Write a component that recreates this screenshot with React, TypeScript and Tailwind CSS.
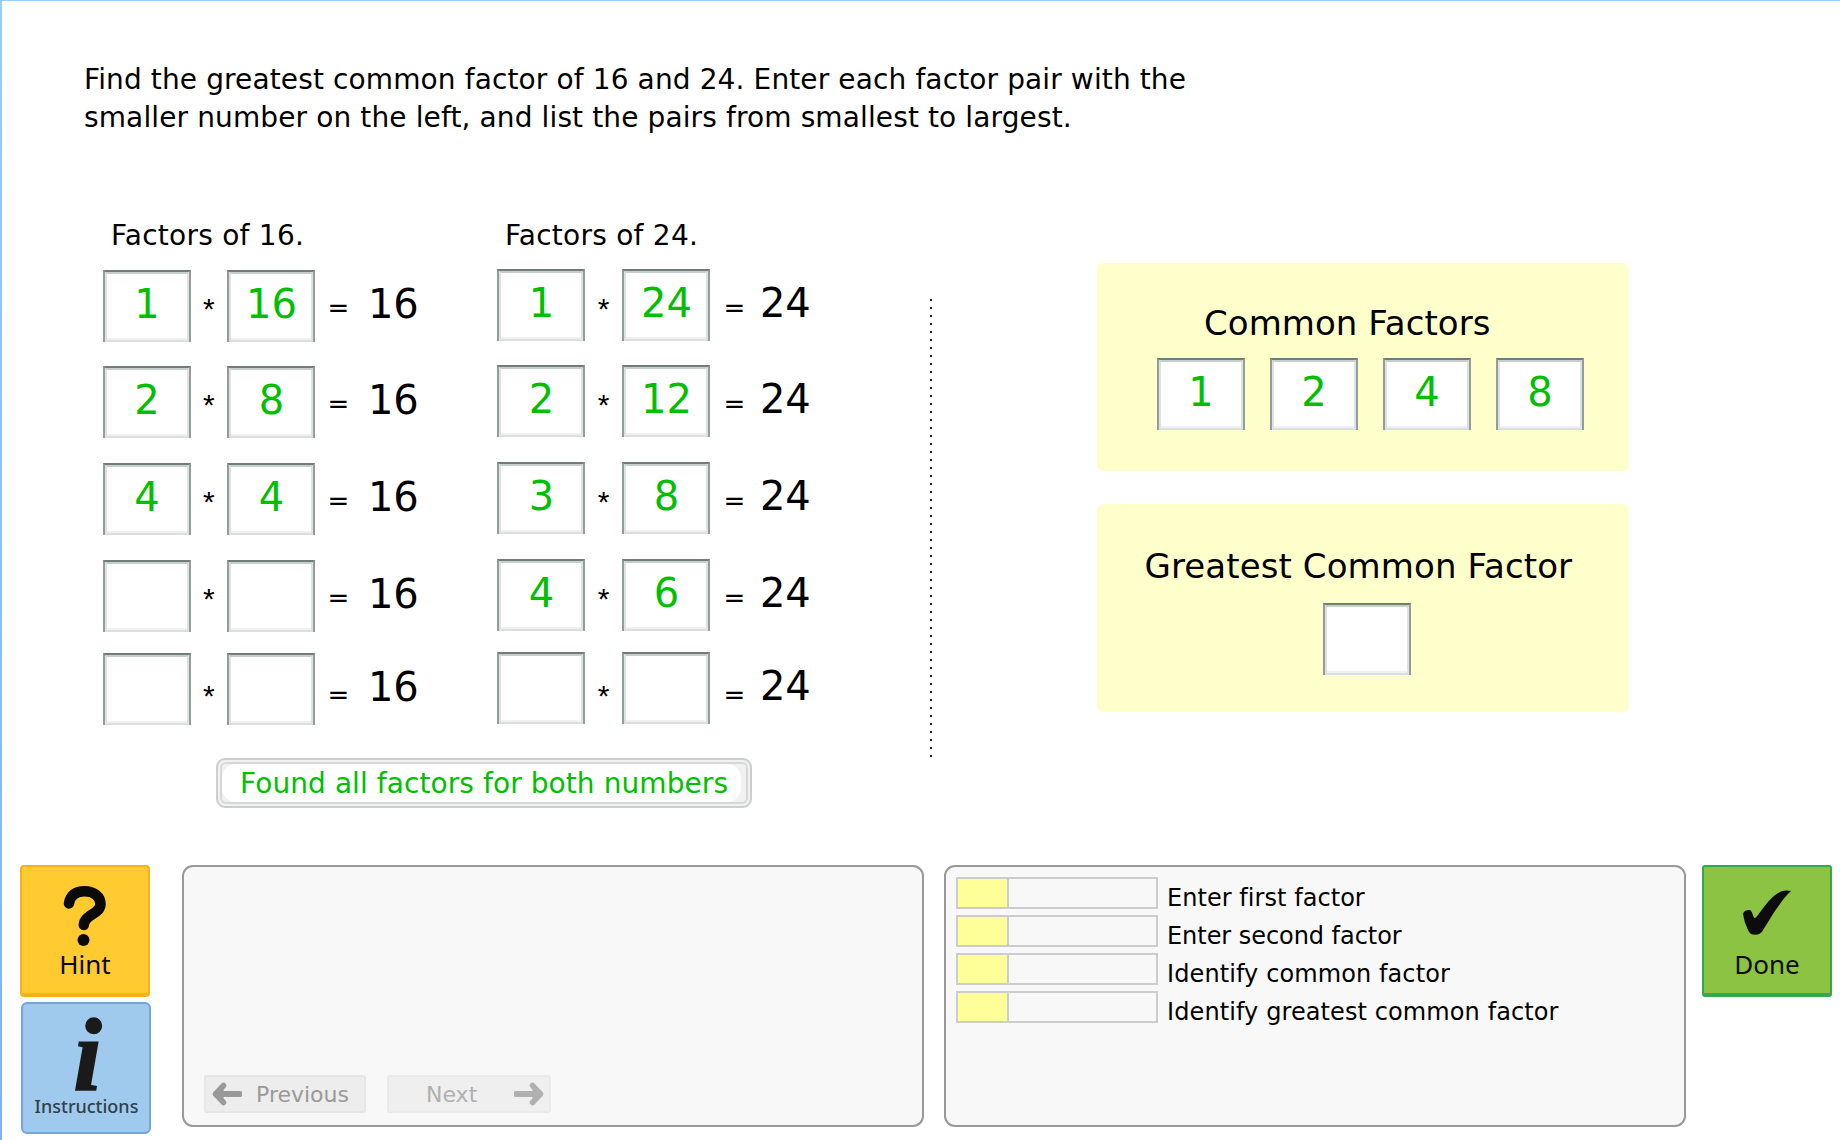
import type { ReactNode } from "react";

type Row = { left: string; right: string };

const factorsOf16: Row[] = [
  { left: "1", right: "16" },
  { left: "2", right: "8" },
  { left: "4", right: "4" },
  { left: "", right: "" },
  { left: "", right: "" },
];

const factorsOf24: Row[] = [
  { left: "1", right: "24" },
  { left: "2", right: "12" },
  { left: "3", right: "8" },
  { left: "4", right: "6" },
  { left: "", right: "" },
];

const commonFactors = ["1", "2", "4", "8"];

const skills = [
  { label: "Enter first factor", tracking: "tracking-[0.05px]" },
  { label: "Enter second factor", tracking: "tracking-[-0.050px]" },
  { label: "Identify common factor", tracking: "tracking-[0.1px]" },
  { label: "Identify greatest common factor", tracking: "tracking-[0.1px]" },
];

// Vertical gap above each row of a factor table; the last row sits a little closer.
const rowGaps = ["mt-0", "mt-[24px]", "mt-[25px]", "mt-[25px]", "mt-[21px]"];

function FactorBox({ value }: { value: string }) {
  return (
    <div className="h-[72px] w-[88px] shrink-0 border-x-2 border-t-2 border-x-[#939d9a] border-t-[#727c79] bg-white">
      <div className="h-[70px] border-2 border-x-[#dde3e1] border-b-[#d9dfdd] border-t-[#c5cfcc]">
        <div className="h-[66px] border-b-2 border-[#f0f0f0] pl-px text-center text-[40px] leading-[60px] text-[#00bf00]">
          {value}
        </div>
      </div>
    </div>
  );
}

function FactorTable({ title, total, rows, second }: { title: string; total: string; rows: Row[]; second?: boolean }) {
  return (
    <section className={second ? "w-[340px]" : "w-[394.5px]"}>
      <h2
        className={`pt-px text-[28px] leading-[32px] tracking-[0.25px] ${second ? "mb-[17px] pl-[8px]" : "mb-[18px] pl-[8.5px]"}`}
      >
        {title}
      </h2>
      {rows.map((row, i) => (
        <div key={i} className={`flex h-[72px] items-start ${rowGaps[i]}`}>
          <FactorBox value={row.left} />
          <span
            className={`shrink-0 text-center font-['Liberation_Sans',sans-serif] text-[30px] leading-[40px] ${
              second ? "w-[37px] pt-[20px]" : "w-[36.5px] pt-[19px]"
            } ${i === 4 ? "translate-y-[4px]" : ""}`}
          >
            *
          </span>
          <FactorBox value={row.right} />
          <span
            className={`shrink-0 text-center text-[26px] leading-[40px] ${
              second ? "w-[49px] pt-[19px]" : "w-[47px] pt-[18px]"
            } ${i === 4 ? "translate-y-[4px]" : ""}`}
          >
            =
          </span>
          <span className={`text-[40px] leading-[68px] tracking-[-0.3px] ${second ? "ml-[1px]" : "ml-[6px]"}`}>
            {total}
          </span>
        </div>
      ))}
    </section>
  );
}

function ToolButton({ className, children }: { className: string; children: ReactNode }) {
  return <button className={`flex flex-col items-center ${className}`}>{children}</button>;
}

function ArrowIcon({ className = "" }: { className?: string }) {
  return (
    <svg viewBox="0 0 30 24" className={`h-[24px] w-[30px] ${className}`} fill="none" stroke="currentColor">
      <path d="M27.500 12H9" strokeWidth="6.200" strokeLinecap="round" />
      <path d="M11.500 3.500L3.500 12L11.500 20.500" fill="currentColor" strokeWidth="5.500" strokeLinecap="round" strokeLinejoin="round" />
    </svg>
  );
}

export default function App() {
  return (
    <div className="h-[1140px] w-[1840px] overflow-hidden bg-gradient-to-b from-[#99ccff] to-[#82b1ec] pl-[2px] font-['DejaVu_Sans',Verdana,sans-serif] text-black">
      <div className="flex h-full flex-col border-t border-[#99ccff] bg-white">
        <p className="h-[159px] pl-[82px] pt-[60px] text-[28px] leading-[38px] tracking-[0.12px]">
          Find the greatest common factor of 16 and 24. Enter each factor pair with the
          <br />
          smaller number on the left, and list the pairs from smallest to largest.
        </p>

        <main className="flex h-[705px] items-start pl-[100.5px]">
          <div className="w-[827.5px] pt-[59px]">
            <div className="flex">
              <FactorTable title="Factors of 16." total="16" rows={factorsOf16} />
              <FactorTable title="Factors of 24." total="24" rows={factorsOf24} second />
            </div>
            <button className="ml-[113.5px] mt-[33px] h-[50px] w-[536px] rounded-[9px] border-2 border-[#cdcfce] bg-[#f0f1f0] p-[2px]">
              <span className="block h-full rounded-[6px] border-2 border-[#d6d8d8] bg-[#f1f1f1] pr-[5px]">
                <span className="block h-full whitespace-nowrap rounded-[14px] bg-white pl-[18px] pt-[2px] text-left text-[28px] leading-[36px] tracking-[0.08px] text-[#00bf00]">
                  Found all factors for both numbers
                </span>
              </span>
            </button>
          </div>

          <div className="mt-[139px] h-[459px] w-[2px] bg-[repeating-linear-gradient(to_bottom,#222_0px,#222_2px,transparent_2px,transparent_8px)]" />

          <div className="ml-[165px] pt-[103px]">
            <section className="h-[208px] w-[532px] rounded-[6px] bg-[#ffffcc]">
              <h2 className="pl-[107px] pt-[40px] text-[34px] leading-[40px] tracking-[0.05px]">Common Factors</h2>
              <div className="flex gap-[25px] pl-[59.5px] pt-[15px]">
                {commonFactors.map((value) => (
                  <FactorBox key={value} value={value} />
                ))}
              </div>
            </section>
            <section className="mt-[33px] h-[208px] w-[532px] rounded-[6px] bg-[#ffffcc]">
              <h2 className="pl-[47.500px] pt-[42px] text-[34px] leading-[40px] tracking-[0.1px]">
                Greatest Common Factor
              </h2>
              <div className="pl-[225.5px] pt-[17px]">
                <FactorBox value="" />
              </div>
            </section>
          </div>
        </main>

        <footer className="flex items-start pl-[18px]">
          <div className="flex w-[162px] flex-col">
            <ToolButton className="h-[132px] w-[130px] rounded-[4px] border-2 border-b-4 border-[#f9b01f] bg-[#ffcb31] text-[#0a0a0a]">
              <svg viewBox="0 0 60 66" className="mt-[13px] h-[66px] w-[60px]" fill="none">
                <path
                  d="M14 23.500C15 15 21 11.200 29.500 11.200C39 11.200 45.500 16.500 45.500 24C45.500 34.500 29.300 34 28.800 45"
                  stroke="currentColor"
                  strokeWidth="10.500"
                  strokeLinecap="round"
                />
                <circle cx="28.500" cy="60" r="6" fill="currentColor" />
              </svg>
              <span className="mt-[2px] font-['Noto_Sans',sans-serif] text-[26px] leading-[32px]">Hint</span>
            </ToolButton>
            <ToolButton className="ml-[1px] mt-[5px] h-[132px] w-[130px] rounded-[6px] border-2 border-[#74a5d8] bg-[#a0caed]">
              <span className="h-[88px] pl-[3px] font-['Liberation_Serif',serif] text-[103px] font-bold italic leading-[102px] text-[#1a1a1a] [-webkit-text-stroke:1.5px_#1a1a1a]">
                i
              </span>
              <span className="pl-px font-['Noto_Sans',sans-serif] text-[18px] font-medium leading-[28px] text-[#30404c]">
                Instructions
              </span>
            </ToolButton>
          </div>

          <section className="flex h-[262px] w-[742px] items-end gap-[21px] rounded-[11px] border-2 border-[#999] bg-[#f8f8f8] pb-[12px] pl-[20px]">
            <button className="flex h-[38px] w-[162px] items-center rounded-[3px] border-2 border-[#e6e6e6] bg-[#ededed] pl-[6px] text-[22px] text-[#999]">
              <ArrowIcon />
              <span className="ml-[14px]">Previous</span>
            </button>
            <button className="flex h-[38px] w-[164px] items-center rounded-[3px] border-2 border-[#eaeaea] bg-[#efefef] pl-[37px] text-[22px] text-[#b0b0b0]">
              <span className="w-[88px] text-left">Next</span>
              <ArrowIcon className="rotate-180" />
            </button>
          </section>

          <section className="ml-[20px] flex h-[262px] w-[742px] flex-col gap-[6px] rounded-[11px] border-2 border-[#999] bg-[#f8f8f8] pl-[10px] pt-[10px]">
            {skills.map((skill) => (
              <div key={skill.label} className="flex h-[32px]">
                <div className="h-[32px] w-[202px] border-2 border-[#ccc]">
                  <div className="h-full w-[51px] border-r-2 border-[#ccc] bg-[#ffff99]" />
                </div>
                <span className={`ml-[9px] pt-[5px] text-[24px] leading-[32px] ${skill.tracking}`}>{skill.label}</span>
              </div>
            ))}
          </section>

          <ToolButton className="ml-[16px] h-[132px] w-[130px] rounded-[3px] border-2 border-b-4 border-[#2faa50] bg-[#8cc342] text-[#0c0c0c]">
            <svg viewBox="0 0 50 46" className="mt-[23px] h-[46px] w-[50px]" fill="currentColor">
              <path d="M1 24Q2 20 7 20C11 20 10.500 28 13 28C16 28 28 3 42 .8Q45 .3 49 1C38 11 27 31 20.500 41Q18 45.300 11 44.500Q8 44.300 6 40Q2 32 1 24Z" />
            </svg>
            <span className="mt-[12px] font-['Noto_Sans',sans-serif] text-[26px] leading-[32px]">Done</span>
          </ToolButton>
        </footer>
      </div>
    </div>
  );
}
